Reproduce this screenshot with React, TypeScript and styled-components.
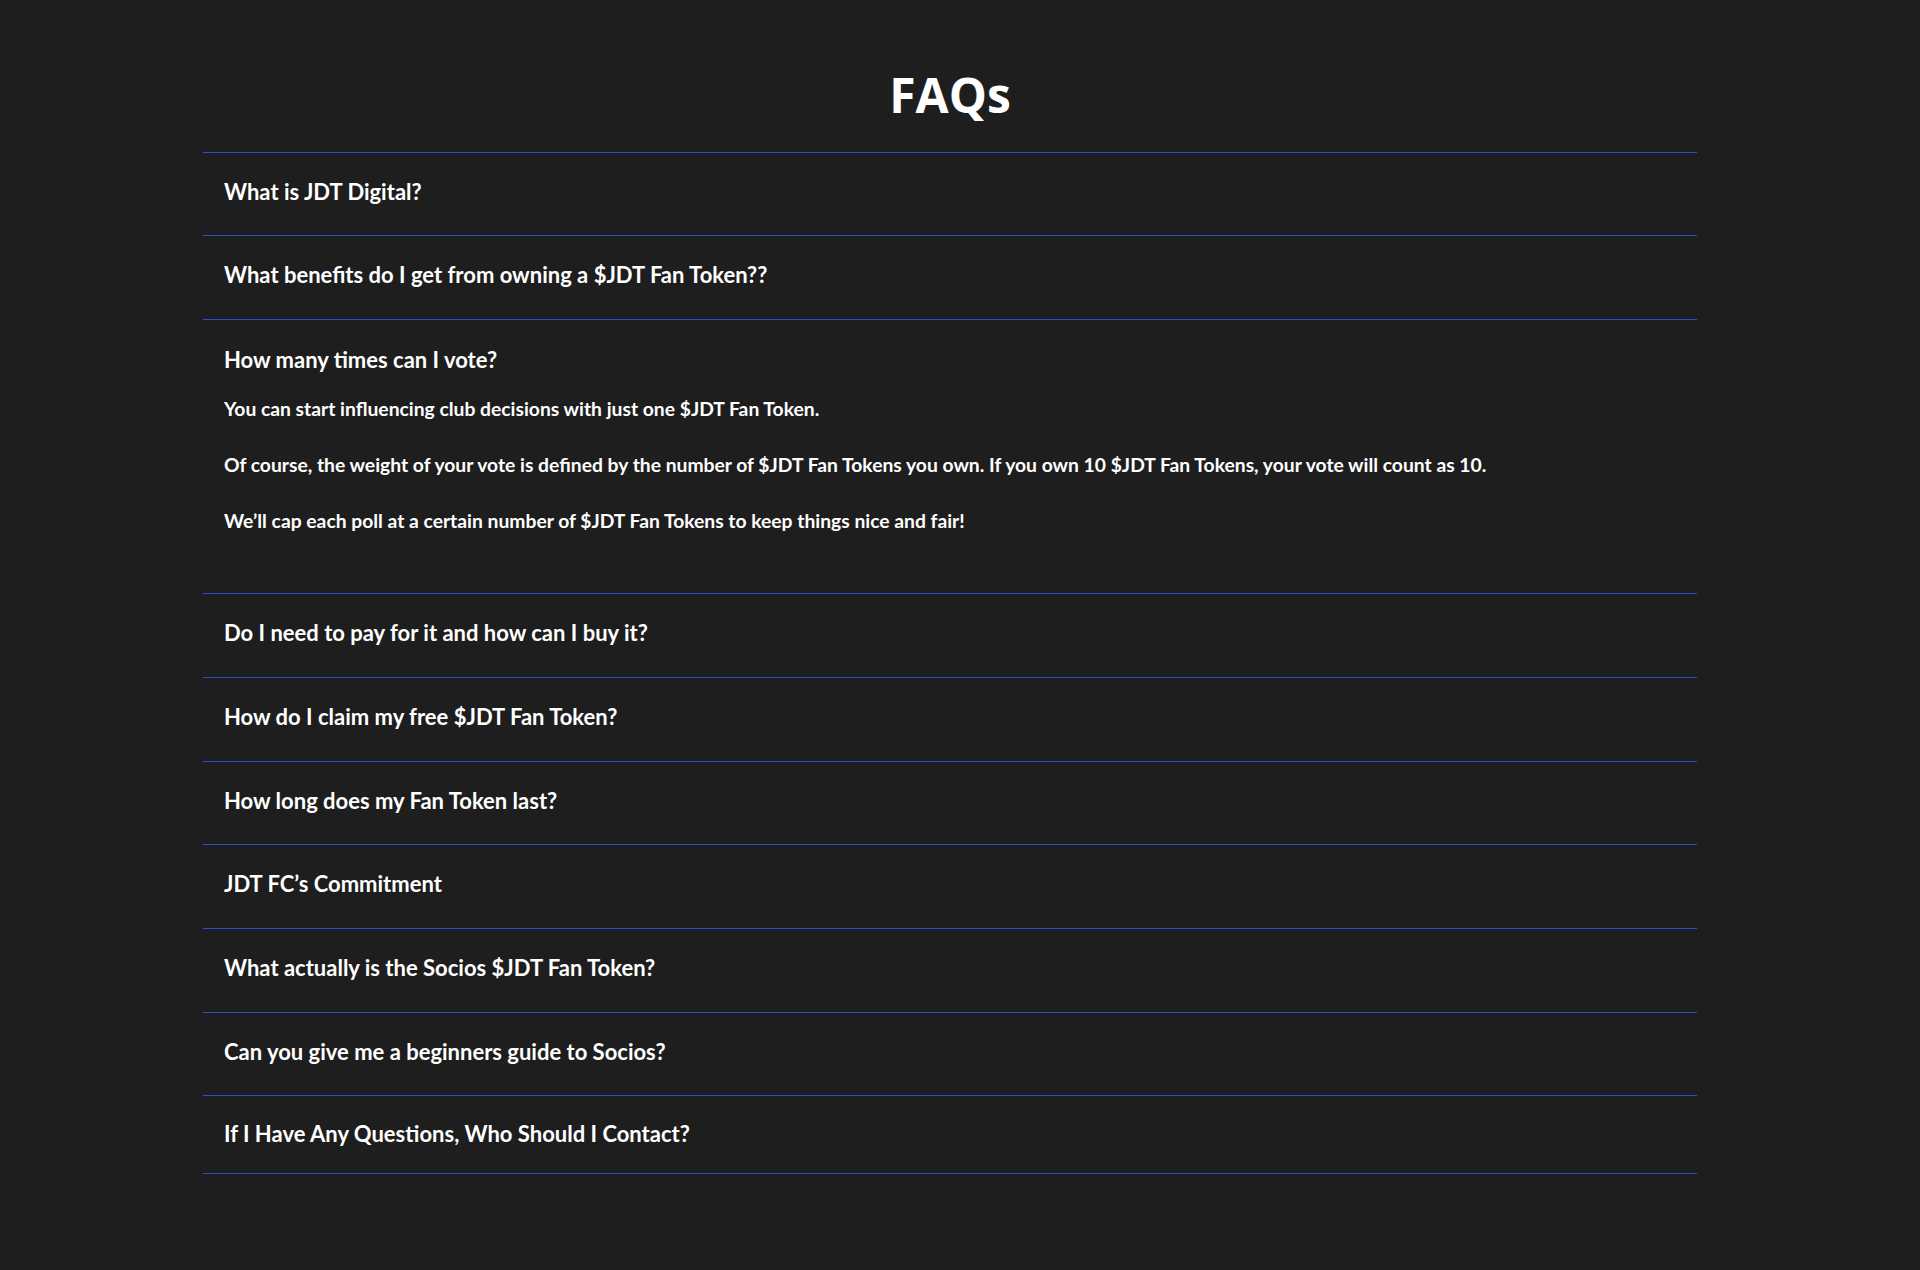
import React from "react";
import styled, { createGlobalStyle } from "styled-components";

const GlobalStyle = createGlobalStyle`
  html, body {
    margin: 0;
    padding: 0;
    background: #1e1e1e;
  }
  body {
    font-family: Lato, "Open Sans", sans-serif;
    color: #ffffff;
    -webkit-font-smoothing: antialiased;
  }
`;

const Page = styled.div`
  min-height: 1270px;
  background: #1e1e1e;
  padding-left: 203px;
  box-sizing: border-box;
`;

const Container = styled.section`
  width: 1494px;
  display: flex;
  flex-direction: column;
`;

const Title = styled.h1`
  margin: 66px 0 28px;
  font-family: "Open Sans", Lato, sans-serif;
  font-weight: 700;
  font-size: 48px;
  line-height: 1.2;
  text-align: center;
  color: #ffffff;
`;

const List = styled.div`
  display: flex;
  flex-direction: column;
  border-top: 1px solid #2850c8;
`;

const Item = styled.div<{ $last?: boolean }>`
  border-bottom: 1px solid #2850c8;
  padding: ${(p) => (p.$last ? "25px 21px 25px" : "26px 21px 30.3px")};
`;

const OpenItem = styled.div`
  border-bottom: 1px solid #2850c8;
  padding: 27px 21px 59px;
  display: flex;
  flex-direction: column;
  gap: 22px;
`;

const Question = styled.h3`
  margin: 0;
  font-family: Lato, sans-serif;
  font-weight: 700;
  font-size: 22px;
  line-height: 1.2;
  color: #ffffff;
`;

const Answer = styled.div`
  display: flex;
  flex-direction: column;
  gap: 29px;
`;

const Paragraph = styled.p`
  margin: 0;
  font-family: Lato, sans-serif;
  font-weight: 700;
  font-size: 19.3px;
  line-height: 27px;
  color: #ffffff;
`;

const questions = [
  "What is JDT Digital?",
  "What benefits do I get from owning a $JDT Fan Token??",
  "__OPEN__",
  "Do I need to pay for it and how can I buy it?",
  "How do I claim my free $JDT Fan Token?",
  "How long does my Fan Token last?",
  "JDT FC’s Commitment",
  "What actually is the Socios $JDT Fan Token?",
  "Can you give me a beginners guide to Socios?",
  "If I Have Any Questions, Who Should I Contact?",
];

export default function App() {
  return (
    <Page>
      <GlobalStyle />
      <Container>
        <Title>FAQs</Title>
        <List>
          {questions.map((q, i) =>
            q === "__OPEN__" ? (
              <OpenItem key={i}>
                <Question>How many times can I vote?</Question>
                <Answer>
                  <Paragraph>
                    You can start influencing club decisions with just one $JDT Fan Token.
                  </Paragraph>
                  <Paragraph>
                    Of course, the weight of your vote is defined by the number of $JDT Fan Tokens you own. If you own 10 $JDT Fan Tokens, your vote will count as 10.
                  </Paragraph>
                  <Paragraph>
                    We’ll cap each poll at a certain number of $JDT Fan Tokens to keep things nice and fair!
                  </Paragraph>
                </Answer>
              </OpenItem>
            ) : (
              <Item key={i} $last={i === questions.length - 1}>
                <Question>{q}</Question>
              </Item>
            )
          )}
        </List>
      </Container>
    </Page>
  );
}
